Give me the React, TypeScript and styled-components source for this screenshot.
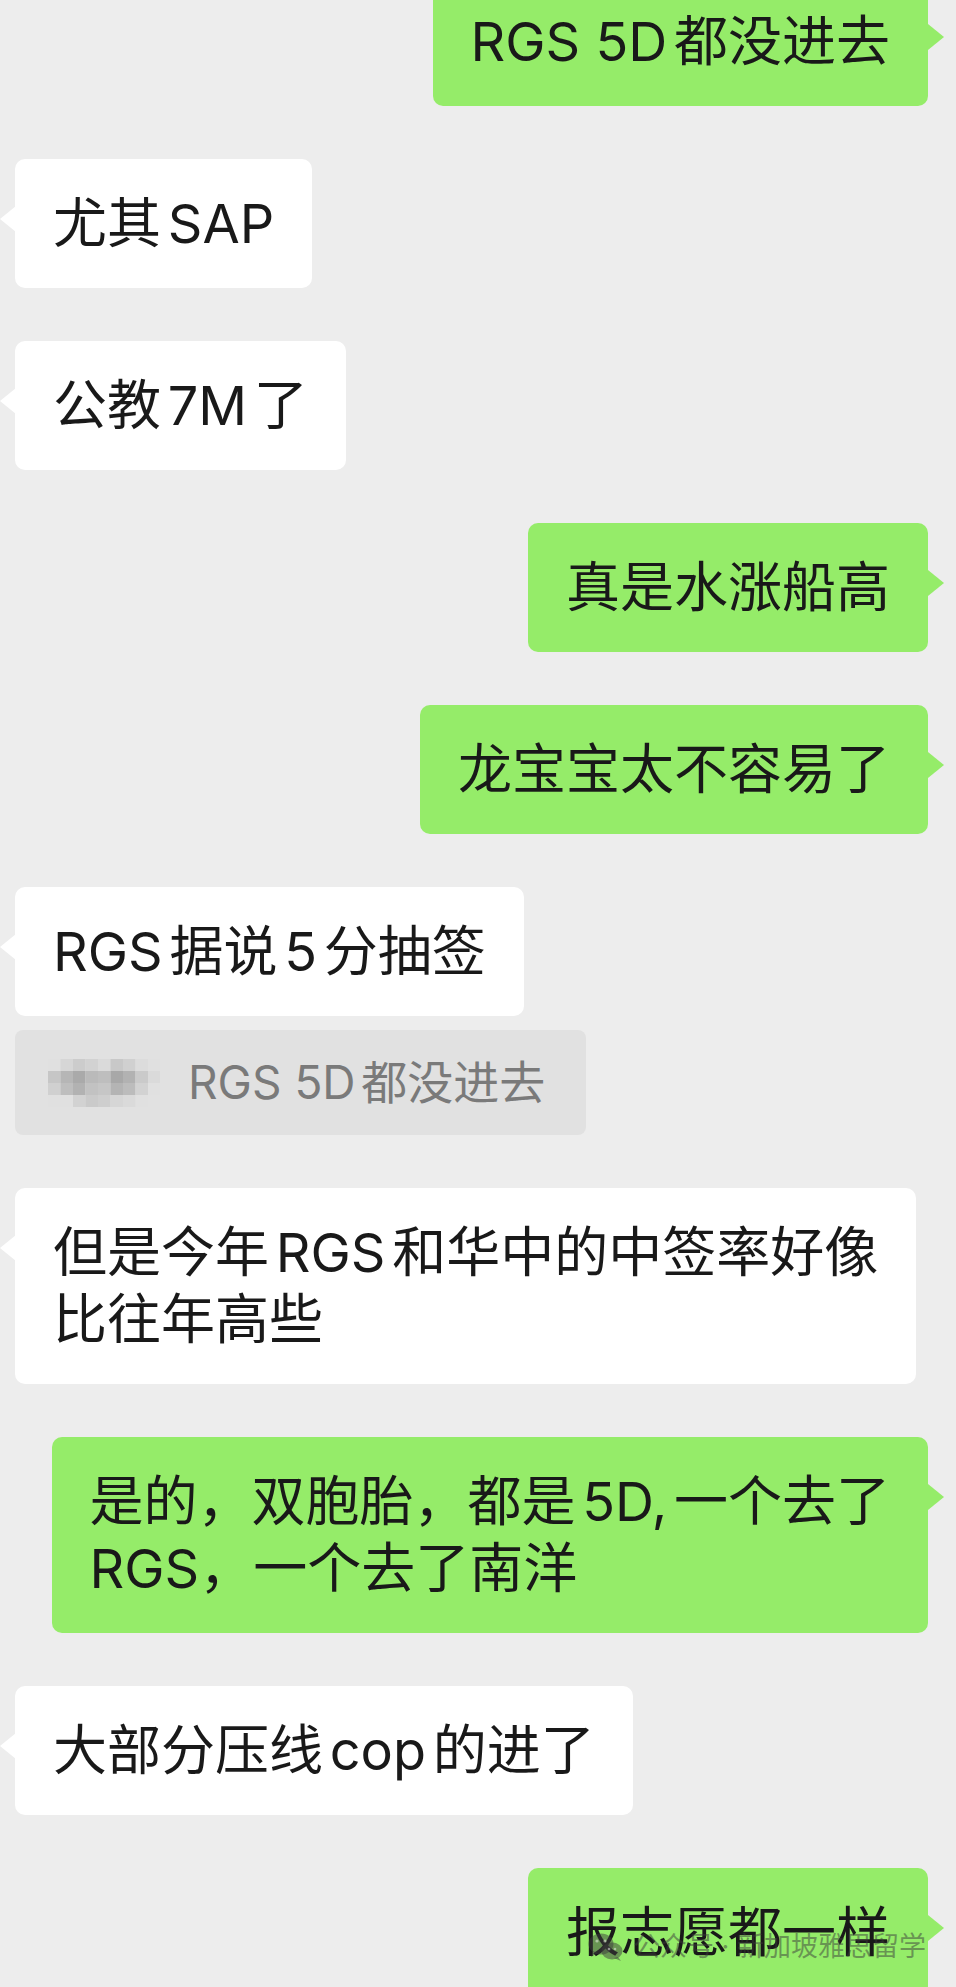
import React from 'react';
import styled, { createGlobalStyle, css } from 'styled-components';

type Side = 'self' | 'other';

interface Message {
    id: number;
    side: Side;
    text: string;
    quote?: string;
}

const MESSAGES: Message[] = [
    { id: 1, side: 'self', text: 'RGS 5D都没进去' },
    { id: 2, side: 'other', text: '尤其SAP' },
    { id: 3, side: 'other', text: '公教7M了' },
    { id: 4, side: 'self', text: '真是水涨船高' },
    { id: 5, side: 'self', text: '龙宝宝太不容易了' },
    { id: 6, side: 'other', text: 'RGS据说5分抽签', quote: 'RGS 5D都没进去' },
    { id: 7, side: 'other', text: '但是今年RGS和华中的中签率好像\n比往年高些' },
    { id: 8, side: 'self', text: '是的，双胞胎，都是5D,一个去了\nRGS，一个去了南洋' },
    { id: 9, side: 'other', text: '大部分压线cop的进了' },
    { id: 10, side: 'self', text: '报志愿都一样' },
];

// pixelated sender name in the quote block
const MOSAIC = [
    ['e0', 'd6', 'cc', 'd2', 'da', 'c8', 'd0', 'dc', 'e0'],
    ['c6', 'b6', 'aa', 'ba', 'be', 'a8', 'b2', 'ca', 'da'],
    ['d0', 'be', 'b2', 'c2', 'c6', 'b4', 'bc', 'd2', 'e0'],
    ['e0', 'e0', 'd2', 'ca', 'ce', 'd6', 'da', 'e0', 'e1'],
];

const HAN = /[\u4e00-\u9fff]/;
const LATIN = /[A-Za-z0-9,]/;

const GlobalStyle = createGlobalStyle`
    html, body {
        margin: 0;
        padding: 0;
        background: #ededed;
    }

    body {
        font-family: Inter, "Noto Sans CJK SC", "Noto Sans", sans-serif;
        -webkit-font-smoothing: antialiased;
    }
`;

const Page = styled.div`
    position: relative;
    width: 956px;
    height: 1987px;
    overflow: hidden;
    background: #ededed;
`;

const List = styled.div`
    display: flex;
    flex-direction: column;
    gap: 53px;
    margin-top: -23px;
`;

const Row = styled.div<{ $side: Side }>`
    display: flex;
    flex-direction: column;
    align-items: ${props => (props.$side === 'self' ? 'flex-end' : 'flex-start')};
    gap: 14px;
    padding: ${props => (props.$side === 'self' ? '0 28px 0 0' : '0 0 0 15px')};
`;

const Bubble = styled.div<{ $side: Side }>`
    position: relative;
    padding: 31px 38px;
    border-radius: 10px;
    font-size: 54px;
    line-height: 67px;
    color: #191919;
    white-space: pre-line;
    background: ${props => (props.$side === 'self' ? '#95ec69' : '#ffffff')};

    &::before {
        content: '';
        position: absolute;
        top: 47px;
        width: 16px;
        height: 26px;
        background: inherit;

        ${props =>
            props.$side === 'self'
                ? css`
                      right: -16px;
                      clip-path: polygon(0 0, 100% 50%, 0 100%);
                  `
                : css`
                      left: -15px;
                      clip-path: polygon(100% 0, 0 50%, 100% 100%);
                  `}
    }
`;

// gap iOS puts between Han characters and latin letters / digits
const Spacer = styled.span`
    display: inline-block;
    width: 0.125em;
`;

const Quote = styled.div`
    display: flex;
    align-items: center;
    gap: 28px;
    padding: 24px 41px 24px 33px;
    border-radius: 8px;
    background: #e1e1e1;
    font-size: 46px;
    line-height: 57px;
    color: #7a7a7a;
`;

const Watermark = styled.div`
    position: absolute;
    left: 588px;
    top: 1931px;
    display: flex;
    align-items: center;
    gap: 9px;
    font-size: 27px;
    line-height: 32px;
    color: rgba(60, 60, 60, 0.5);
    pointer-events: none;
`;

const autospace = (text: string) => {
    const parts: React.ReactNode[] = [];
    let run = '';
    for (let i = 0; i < text.length; i++) {
        const prev = text[i - 1];
        const ch = text[i];
        if (
            prev &&
            ((HAN.test(prev) && LATIN.test(ch)) || (LATIN.test(prev) && HAN.test(ch)))
        ) {
            parts.push(run, <Spacer key={i} />);
            run = '';
        }
        run += ch;
    }
    parts.push(run);
    return parts;
};

const Mosaic = () => (
    <svg width="112" height="48" viewBox="0 0 112 48">
        {MOSAIC.map((row, y) =>
            row.map((shade, x) => (
                <rect
                    key={`${x}-${y}`}
                    x={x * 12.5}
                    y={y * 12}
                    width="12.5"
                    height="12"
                    fill={`#${shade}${shade}${shade}`}
                />
            )),
        )}
    </svg>
);

const WechatIcon = () => (
    <svg width="36" height="30" viewBox="0 0 36 30">
        <g fill="rgba(60,60,60,0.5)">
            <ellipse cx="13" cy="12" rx="12.5" ry="10.5" />
            <path d="M5 19 L3 25 L10 21 Z" />
            <ellipse cx="24" cy="19" rx="10.5" ry="8.5" />
            <path d="M30 25 L33 29 L26 26 Z" />
        </g>
        <g fill="rgba(255,255,255,0.45)">
            <circle cx="9" cy="9" r="1.6" />
            <circle cx="17" cy="9" r="1.6" />
            <circle cx="21" cy="17" r="1.3" />
            <circle cx="27" cy="17" r="1.3" />
        </g>
    </svg>
);

const App = () => (
    <>
        <GlobalStyle />
        <Page>
            <List>
                {MESSAGES.map(message => (
                    <Row key={message.id} $side={message.side}>
                        <Bubble $side={message.side}>{autospace(message.text)}</Bubble>
                        {message.quote && (
                            <Quote>
                                <Mosaic />
                                <span>{autospace(message.quote)}</span>
                            </Quote>
                        )}
                    </Row>
                ))}
            </List>
            <Watermark>
                <WechatIcon />
                <span>公众号 · 新加坡雅思留学</span>
            </Watermark>
        </Page>
    </>
);

export default App;
